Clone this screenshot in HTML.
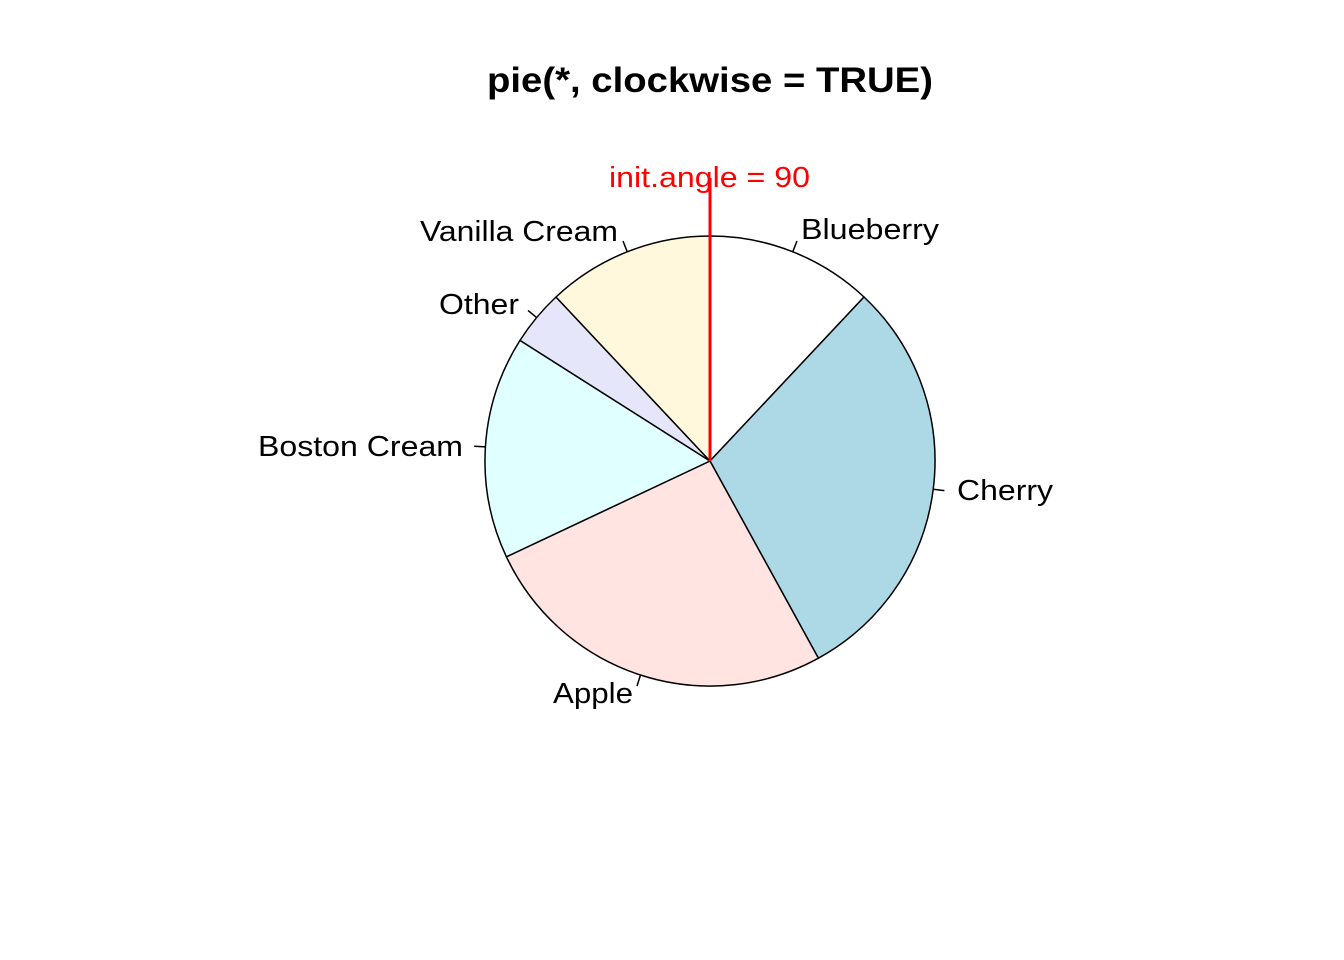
<!DOCTYPE html>
<html><head><meta charset="utf-8"><style>html,body{margin:0;padding:0;background:#fff}svg{display:block}</style></head>
<body>
<svg width="1344" height="960" xmlns="http://www.w3.org/2000/svg" font-family="Liberation Sans, Arial, sans-serif">
<rect width="1344" height="960" fill="#fff"/>
<g stroke="#000" stroke-width="1.5" stroke-linejoin="round">
<path d="M710,461 L710,236 A225,225 0 0 1 864.0,297.0 Z" fill="#ffffff"/>
<path d="M710,461 L864.0,297.0 A225,225 0 0 1 818.4,658.2 Z" fill="#ADD8E6"/>
<path d="M710,461 L818.4,658.2 A225,225 0 0 1 506.4,556.8 Z" fill="#FFE4E1"/>
<path d="M710,461 L506.4,556.8 A225,225 0 0 1 520.0,340.4 Z" fill="#E0FFFF"/>
<path d="M710,461 L520.0,340.4 A225,225 0 0 1 556.0,297.0 Z" fill="#E6E6FA"/>
<path d="M710,461 L556.0,297.0 A225,225 0 0 1 710,236 Z" fill="#FFF8DC"/>
<line x1="792.8" y1="251.7" x2="797" y2="241"/>
<line x1="933.2" y1="489.2" x2="944.4" y2="490.6"/>
<line x1="640.5" y1="675" x2="637" y2="686"/>
<line x1="485.4" y1="446.9" x2="474.2" y2="446.2"/>
<line x1="536.6" y1="317.6" x2="528" y2="310.4"/>
<line x1="627.2" y1="251.7" x2="623" y2="241"/>
</g>
<g font-size="29" fill="#000" lengthAdjust="spacingAndGlyphs">
<text x="801" y="239" textLength="138" lengthAdjust="spacingAndGlyphs">Blueberry</text>
<text x="957" y="500" textLength="96" lengthAdjust="spacingAndGlyphs">Cherry</text>
<text x="553" y="703" textLength="80" lengthAdjust="spacingAndGlyphs">Apple</text>
<text x="258" y="456" textLength="205" lengthAdjust="spacingAndGlyphs">Boston Cream</text>
<text x="439" y="314" textLength="80" lengthAdjust="spacingAndGlyphs">Other</text>
<text x="420" y="241" textLength="198" lengthAdjust="spacingAndGlyphs">Vanilla Cream</text>
</g>
<line x1="710" y1="461" x2="710" y2="178" stroke="#f00" stroke-width="3"/>
<text x="609" y="187" font-size="29" fill="#f00" textLength="201" lengthAdjust="spacingAndGlyphs">init.angle = 90</text>
<text x="487" y="92" font-size="35" font-weight="bold" textLength="446" lengthAdjust="spacingAndGlyphs">pie(*, clockwise = TRUE)</text>
</svg>
</body></html>
